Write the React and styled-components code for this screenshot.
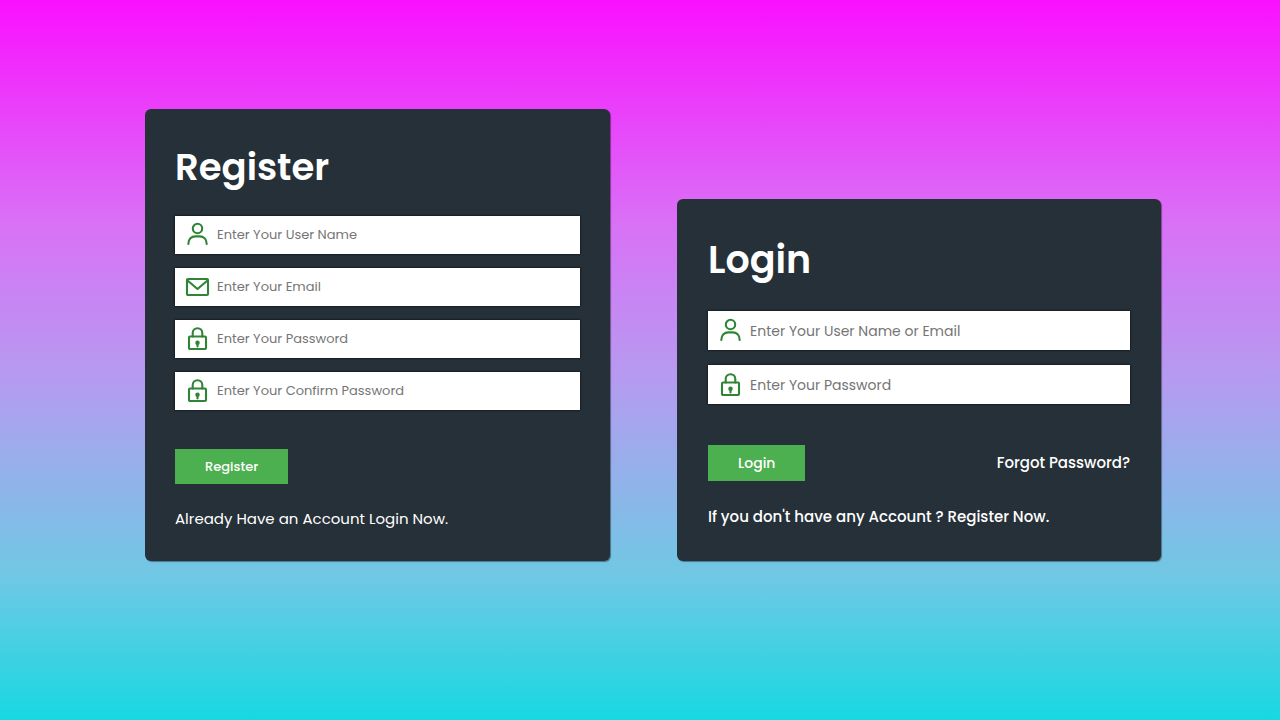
import React, { useId } from "react";
import styled, { createGlobalStyle } from "styled-components";

const GlobalStyle = createGlobalStyle`
  *, *::before, *::after { box-sizing: border-box; }
  body {
    margin: 0;
    font-family: Poppins, Inter, "Liberation Sans", sans-serif;
    color: #fff;
  }
`;

const Page = styled.main`
  min-height: 100vh;
  display: grid;
  grid-template-columns: 465fr 484fr;
  column-gap: 67px;
  align-items: end;
  align-content: start;
  padding: 109px 119px 40px 145px;
  background: linear-gradient(#fa10ff 0%, #d971f6 31%, #b49cf0 53%, #70c8e4 80%, #17d8e1 100%);

  @media (max-width: 800px) {
    grid-template-columns: 1fr;
    row-gap: 40px;
    padding: 40px 20px;
  }
`;

const Card = styled.form`
  display: flex;
  flex-direction: column;
  padding: ${(p) => (p.$large ? "31px 31px 32px" : "30px")};
  border-radius: 6px;
  background: #263038;
  box-shadow: 1px 1px 1px rgba(0, 0, 0, 0.4);
`;

const Title = styled.h1`
  margin: 0;
  font-size: ${(p) => (p.$large ? 38 : 37)}px;
  line-height: ${(p) => (p.$large ? 60 : 56)}px;
  font-weight: 600;
`;

const Fields = styled.div`
  display: flex;
  flex-direction: column;
  gap: ${(p) => (p.$large ? 15 : 14)}px;
  margin: ${(p) => (p.$large ? "21px 0 41px" : "21px 0 39px")};
`;

const Field = styled.label`
  display: flex;
  align-items: center;
  gap: 6px;
  height: ${(p) => (p.$large ? 39 : 38)}px;
  padding: 0 10px;
  background: #fff;
  box-shadow: 0 0 2px #000;
`;

const Icon = styled.svg`
  flex: none;
  width: 26px;
  height: 26px;
  fill: none;
  stroke: #2f8436;
  stroke-width: 2.1;
  stroke-linecap: round;
  stroke-linejoin: round;
`;

const Input = styled.input`
  flex: 1;
  min-width: 0;
  border: 0;
  padding: 0;
  outline: 0;
  background: transparent;
  color: #222;
  font: inherit;
  font-size: ${(p) => (p.$large ? 14 : 13)}px;
  line-height: 20px;

  &::placeholder { color: #757575; opacity: 1; }
`;

const Actions = styled.div`
  display: flex;
  align-items: center;
  justify-content: space-between;
`;

const Button = styled.button`
  height: ${(p) => (p.$large ? 36 : 35)}px;
  padding: 0 30px;
  border: 0;
  background: #4caf50;
  color: #fff;
  font: inherit;
  font-size: ${(p) => (p.$large ? 14 : 13)}px;
  font-weight: 500;
  cursor: pointer;
`;

const TextLink = styled.a`
  color: inherit;
  text-decoration: none;
  font-size: 15px;
  font-weight: ${(p) => (p.$large ? 500 : 400)};
  line-height: 24px;
`;

const Footer = styled.p`
  margin: ${(p) => (p.$large ? 24 : 23)}px 0 0;
  font-size: 15px;
  font-weight: ${(p) => (p.$large ? 500 : 400)};
  line-height: 24px;
`;

const shapes = {
  user: (
    <>
      <circle cx="12.5" cy="6.5" r="4.7" />
      <path d="M3.3 22C3.3 17 6.6 14.4 10.2 14.4h4.6c3.6 0 6.9 2.6 6.9 7.6" />
    </>
  ),
  mail: (
    <>
      <rect x="2" y="5" width="21" height="16" rx="1" />
      <path d="M2.5 6.5l10 8.5 10-8.5" />
    </>
  ),
  lock: (
    <>
      <rect x="4" y="10.5" width="17" height="12.5" rx="1" />
      <path d="M7.7 10.5V7a4.8 4.8 0 0 1 9.6 0v3.5" />
      <circle cx="12.5" cy="16.8" r="1.2" />
      <path d="M12.5 17v3.5" />
    </>
  ),
};

function TextField({ icon, $large, ...rest }) {
  const id = useId();
  return (
    <Field htmlFor={id} $large={$large}>
      <Icon viewBox="0 0 26 26" aria-hidden="true">{shapes[icon]}</Icon>
      <Input id={id} $large={$large} aria-label={rest.placeholder} {...rest} />
    </Field>
  );
}

export default function App() {
  const stop = (e) => e.preventDefault();
  return (
    <>
      <GlobalStyle />
      <Page>
        <Card id="register" onSubmit={stop}>
          <Title>Register</Title>
          <Fields>
            <TextField icon="user" placeholder="Enter Your User Name" />
            <TextField icon="mail" type="email" placeholder="Enter Your Email" />
            <TextField icon="lock" type="password" placeholder="Enter Your Password" />
            <TextField icon="lock" type="password" placeholder="Enter Your Confirm Password" />
          </Fields>
          <Actions>
            <Button type="submit">Register</Button>
          </Actions>
          <Footer>
            Already Have an Account <TextLink href="#login">Login Now.</TextLink>
          </Footer>
        </Card>
        <Card id="login" $large onSubmit={stop}>
          <Title $large>Login</Title>
          <Fields $large>
            <TextField $large icon="user" placeholder="Enter Your User Name or Email" />
            <TextField $large icon="lock" type="password" placeholder="Enter Your Password" />
          </Fields>
          <Actions>
            <Button $large type="submit">Login</Button>
            <TextLink $large href="#forgot">Forgot Password?</TextLink>
          </Actions>
          <Footer $large>
            If you don't have any Account ? <TextLink $large href="#register">Register Now.</TextLink>
          </Footer>
        </Card>
      </Page>
    </>
  );
}
